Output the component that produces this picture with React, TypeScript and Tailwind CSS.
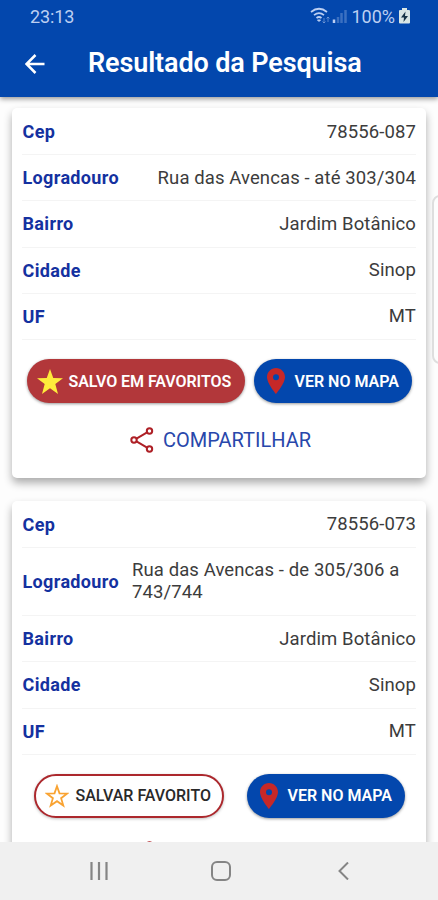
import type { ReactNode } from "react";

type Field = { label: string; value: string; wrap?: boolean };

function Row({ label, value, wrap }: Field) {
  return (
    <div
      className={`flex items-center justify-between border-b-[1.5px] border-[#f4f4f4] ${wrap ? "h-[68.5px]" : "h-[46.2px]"}`}
    >
      <span className="whitespace-nowrap pl-[0.5px] text-[18px] font-bold tracking-[0.35px] text-[#1431a0]">{label}</span>
      <span
        className={`text-[18.5px] leading-[22px] tracking-[0.1px] text-[#3c3c3c] ${wrap ? "w-[284px]" : "whitespace-nowrap"}`}
      >
        {value}
      </span>
    </div>
  );
}

function PinIcon() {
  return (
    <svg viewBox="0 0 18 26" className="h-[26px] w-[18px] shrink-0" fill="#c62828">
      <path
        fillRule="evenodd"
        d="M9 0C4 0 0 4 0 9c0 6.500 9 17 9 17s9-10.500 9-17c0-5-4-9-9-9Zm0 6.200a3 3 0 1 1 0 6A3 3 0 0 1 9 6.200Z"
      />
    </svg>
  );
}

function StarIcon({ filled }: { filled: boolean }) {
  return filled ? (
    <svg viewBox="0 0 24 24" className="h-[25px] w-[26px] shrink-0" preserveAspectRatio="none">
      <path d="m12 0 3 8.600 9 .3-7.100 5.600L19.400 24 12 18.500 4.600 24l2.500-9.500L0 8.900l9-.3Z" fill="#ffeb3b" />
    </svg>
  ) : (
    <svg viewBox="0 0 24 24" className="h-[24px] w-[24px] shrink-0">
      <path
        d="m12 2.200 2.500 7.200 7.600.2-6 4.600 2.200 7.400-6.300-4.400-6.300 4.400 2.200-7.400-6-4.600 7.600-.2Z"
        fill="none"
        stroke="#f9a332"
        strokeWidth="1.800"
      />
    </svg>
  );
}

function ShareIcon() {
  return (
    <svg viewBox="0 0 24 26" className="h-[26px] w-[24px] shrink-0" fill="none" stroke="#ae2026" strokeWidth="2">
      <circle cx="4" cy="13" r="2.700" />
      <circle cx="19.500" cy="4" r="2.700" />
      <circle cx="19.500" cy="22" r="2.700" />
      <path d="m6.500 11.600 10.600-6.200M6.500 14.400l10.600 6.200" />
    </svg>
  );
}

function MapButton() {
  return (
    <button className="flex h-[44px] w-[158px] items-center rounded-full bg-[#0347ad] pl-[13px] text-white shadow-[0_1px_3px_rgba(0,0,0,0.4)]">
      <PinIcon />
      <span className="ml-[10px] whitespace-nowrap pt-px text-[16px] font-semibold">VER NO MAPA</span>
    </button>
  );
}

function Card({ fields, children }: { fields: Field[]; children: ReactNode }) {
  return (
    <section className="h-[370px] shrink-0 rounded-[5px] bg-white px-[10px] pt-px shadow-[0_5px_9px_rgba(0,0,0,0.32)]">
      {fields.map((field) => (
        <Row key={field.label} {...field} />
      ))}
      {children}
    </section>
  );
}

export default function App() {
  return (
    <div className="relative flex h-[900px] w-[438px] flex-col overflow-hidden bg-[#fdfdfd] font-[Roboto,sans-serif]">
      <header className="z-10 h-[97px] shrink-0 bg-[#0347ad] text-white shadow-[0_2px_5px_rgba(0,0,0,0.4)]">
        <div className="flex h-[32px] items-center justify-between pl-[30px] pr-[28px] text-[#bccff2]">
          <span className="text-[18px] tracking-[-0.1px]">23:13</span>
          <div className="flex items-center">
            <svg viewBox="0 0 38 18" className="h-[18px] w-[38px]" fill="none" stroke="currentColor">
              <path d="M1 5Q9-1.500 17 5M4 8.200Q9 4 14 8.200M6.500 11Q9 9 11.500 11" strokeWidth="1.700" />
              <path d="m7.500 13 1.500 1.500 1.500-1.500Z" fill="currentColor" />
              <path d="M14 11v5m-1.500-1.500L14 16l1.500-1.500M18 15v-5m-1.500 1.500L18 10l1.500 1.500" strokeWidth="0.900" opacity="0.500" />
              <path d="M24 12.500V16" strokeWidth="2.500" />
              <path d="M28 10v6M31.500 6v10M35.500 3v13" strokeWidth="2.500" opacity="0.300" />
            </svg>
            <span className="ml-[3px] text-[18px]">100%</span>
            <svg viewBox="0 0 11 16" className="ml-[4px] h-[16px] w-[11px]">
              <path d="M3 0h5v2h2a1 1 0 0 1 1 1v11.500a1 1 0 0 1-1 1H1a1 1 0 0 1-1-1V3a1 1 0 0 1 1-1h2Z" fill="#d9e6e5" />
              <path d="M6.500 3.500 2 9.500h3L4.500 14 9 8H6Z" fill="#173347" />
            </svg>
          </div>
        </div>
        <div className="flex h-[63px] items-center pl-[25px]">
          <svg viewBox="0 0 20 20" className="h-[20px] w-[20px]" fill="none" stroke="currentColor" strokeWidth="2.500">
            <path d="M19.500 10H2M10.500 1 1.500 10l9 9" />
          </svg>
          <h1 className="ml-[43px] whitespace-nowrap text-[27px] font-semibold tracking-[-0.12px]">
            Resultado da Pesquisa
          </h1>
        </div>
      </header>

      <main className="flex min-h-0 flex-1 flex-col gap-[22.5px] overflow-hidden px-[12px] pt-[11px]">
        <Card
          fields={[
            { label: "Cep", value: "78556-087" },
            { label: "Logradouro", value: "Rua das Avencas - até 303/304" },
            { label: "Bairro", value: "Jardim Botânico" },
            { label: "Cidade", value: "Sinop" },
            { label: "UF", value: "MT" },
          ]}
        >
          <div className="mt-[19.5px] flex justify-center gap-[9px]">
            <button className="flex h-[44px] w-[218px] items-center rounded-full bg-[#b2373a] pl-[10px] text-white shadow-[0_1px_3px_rgba(0,0,0,0.4)]">
              <StarIcon filled />
              <span className="ml-[6px] whitespace-nowrap pt-px text-[16px] font-semibold tracking-[-0.05px]">
                SALVO EM FAVORITOS
              </span>
            </button>
            <MapButton />
          </div>
          <button className="mx-auto mt-[24px] flex items-center pl-[3px]">
            <ShareIcon />
            <span className="ml-[9px] text-[20px] leading-[26px] text-[#2847ab]">COMPARTILHAR</span>
          </button>
        </Card>
        <Card
          fields={[
            { label: "Cep", value: "78556-073" },
            { label: "Logradouro", value: "Rua das Avencas - de 305/306 a 743/744", wrap: true },
            { label: "Bairro", value: "Jardim Botânico" },
            { label: "Cidade", value: "Sinop" },
            { label: "UF", value: "MT" },
          ]}
        >
          <div className="mt-[19px] flex justify-center gap-[23px]">
            <button className="flex h-[44px] w-[190px] items-center rounded-full border-2 border-[#ac282d] bg-white pl-[9px] text-[#292929] shadow-[0_1px_3px_rgba(0,0,0,0.25)]">
              <StarIcon filled={false} />
              <span className="ml-[7px] whitespace-nowrap pt-px text-[16px] font-medium">SALVAR FAVORITO</span>
            </button>
            <MapButton />
          </div>
          <div className="mt-[23px] pl-[108px]">
            <ShareIcon />
          </div>
        </Card>
      </main>

      <div className="absolute left-[432px] top-[195px] h-[169px] w-[16px] rounded-[9px] border-2 border-[#dedede] bg-[#fdfdfd]" />

      <nav className="z-10 flex h-[58px] shrink-0 items-center bg-[#f0f0f0] pl-[90px] text-[#858585]">
        <svg viewBox="0 0 18 18" className="h-[18px] w-[18px]" stroke="currentColor" strokeWidth="2.200">
          <path d="M1.500 0v18M9 0v18M16.500 0v18" />
        </svg>
        <div className="ml-[103px] h-[20px] w-[20px] rounded-[6px] border-2 border-current" />
        <svg viewBox="0 0 11 18" className="ml-[107px] h-[18px] w-[11px]" fill="none" stroke="currentColor" strokeWidth="2">
          <path d="m10 .5-8.500 8.500 8.500 8.500" />
        </svg>
      </nav>
    </div>
  );
}
